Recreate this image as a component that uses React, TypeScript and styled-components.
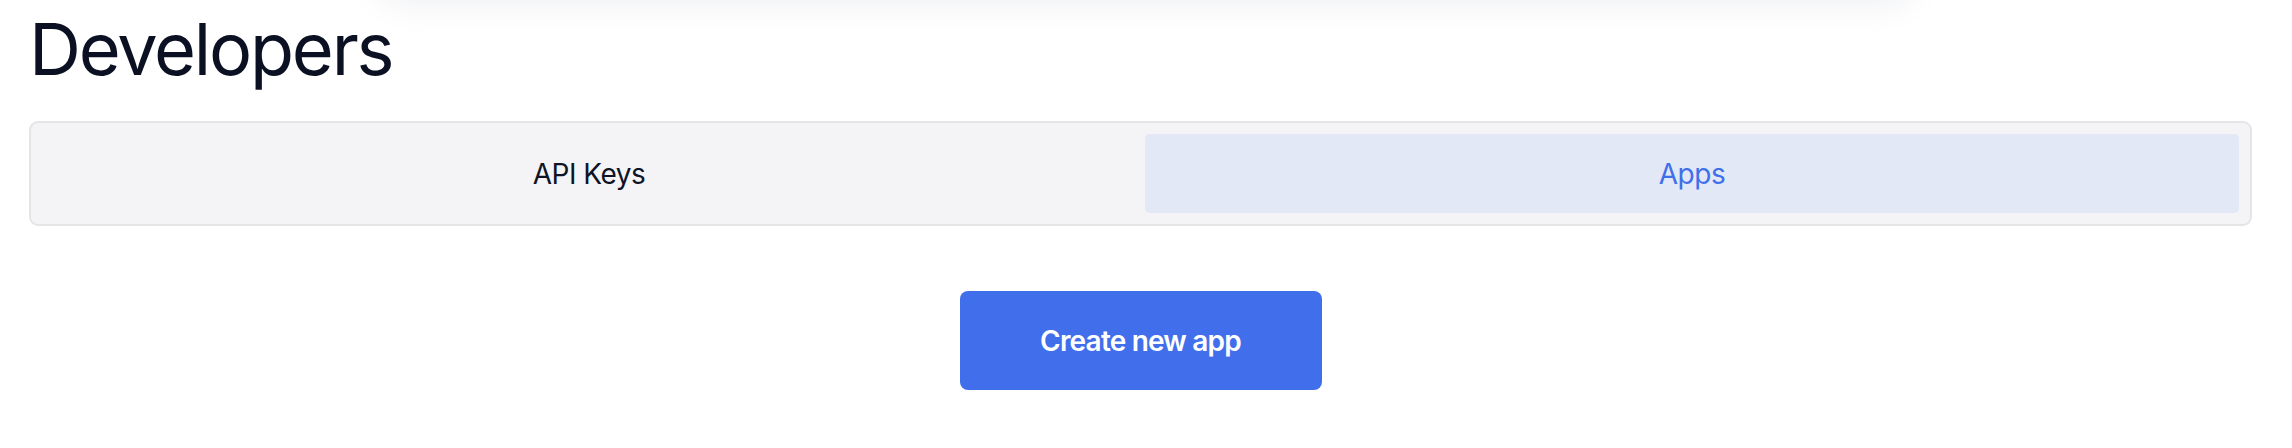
import React, { useState } from "react";
import styled, { createGlobalStyle } from "styled-components";

const GlobalStyle = createGlobalStyle`
  html, body {
    margin: 0;
    padding: 0;
    background: #ffffff;
  }
  body {
    font-family: Inter, "Liberation Sans", Arial, sans-serif;
    -webkit-font-smoothing: antialiased;
  }
`;

const Page = styled.div`
  position: relative;
  padding: 13px 40px 40px 29px;
  overflow: hidden;
  min-height: 448px;
  box-sizing: border-box;
`;

const TopShade = styled.div`
  position: absolute;
  top: -60px;
  left: 50%;
  transform: translateX(-50%);
  width: 1540px;
  height: 60px;
  border-radius: 40px;
  background: #ffffff;
  box-shadow: 0 2px 36px rgba(30, 41, 80, 0.08);
`;

const Title = styled.h1`
  margin: 0;
  font-size: 72px;
  line-height: 72px;
  font-weight: 400;
  letter-spacing: -2.2px;
  color: #0b1023;
`;

const TabList = styled.div`
  margin-top: 36px;
  display: grid;
  grid-template-columns: 1fr 1fr;
  gap: 9px;
  padding: 11px;
  border: 2px solid #e5e5e8;
  border-radius: 9px;
  background: #f4f4f6;
`;

const Tab = styled.button<{ $active?: boolean }>`
  height: 79px;
  border: none;
  border-radius: 5px;
  font-family: Inter, "Liberation Sans", Arial, sans-serif;
  font-size: 28px;
  font-weight: 400;
  letter-spacing: -0.5px;
  cursor: pointer;
  background: ${(p) => (p.$active ? "#e2e8f5" : "transparent")};
  color: ${(p) => (p.$active ? "#3f6fe9" : "#0e1426")};
`;

const Actions = styled.div`
  display: flex;
  justify-content: center;
  margin-top: 65px;
`;

const PrimaryButton = styled.button`
  width: 362px;
  height: 99px;
  border: none;
  border-radius: 8px;
  background: #416fec;
  color: #ffffff;
  font-family: Inter, "Liberation Sans", Arial, sans-serif;
  font-size: 28px;
  font-weight: 600;
  letter-spacing: -0.8px;
  cursor: pointer;
`;

export default function App() {
  const [tab, setTab] = useState<"keys" | "apps">("apps");
  return (
    <>
      <GlobalStyle />
      <Page>
        <TopShade />
        <Title>Developers</Title>
        <TabList>
          <Tab $active={tab === "keys"} onClick={() => setTab("keys")}>
            API Keys
          </Tab>
          <Tab $active={tab === "apps"} onClick={() => setTab("apps")}>
            Apps
          </Tab>
        </TabList>
        <Actions>
          <PrimaryButton>Create new app</PrimaryButton>
        </Actions>
      </Page>
    </>
  );
}
